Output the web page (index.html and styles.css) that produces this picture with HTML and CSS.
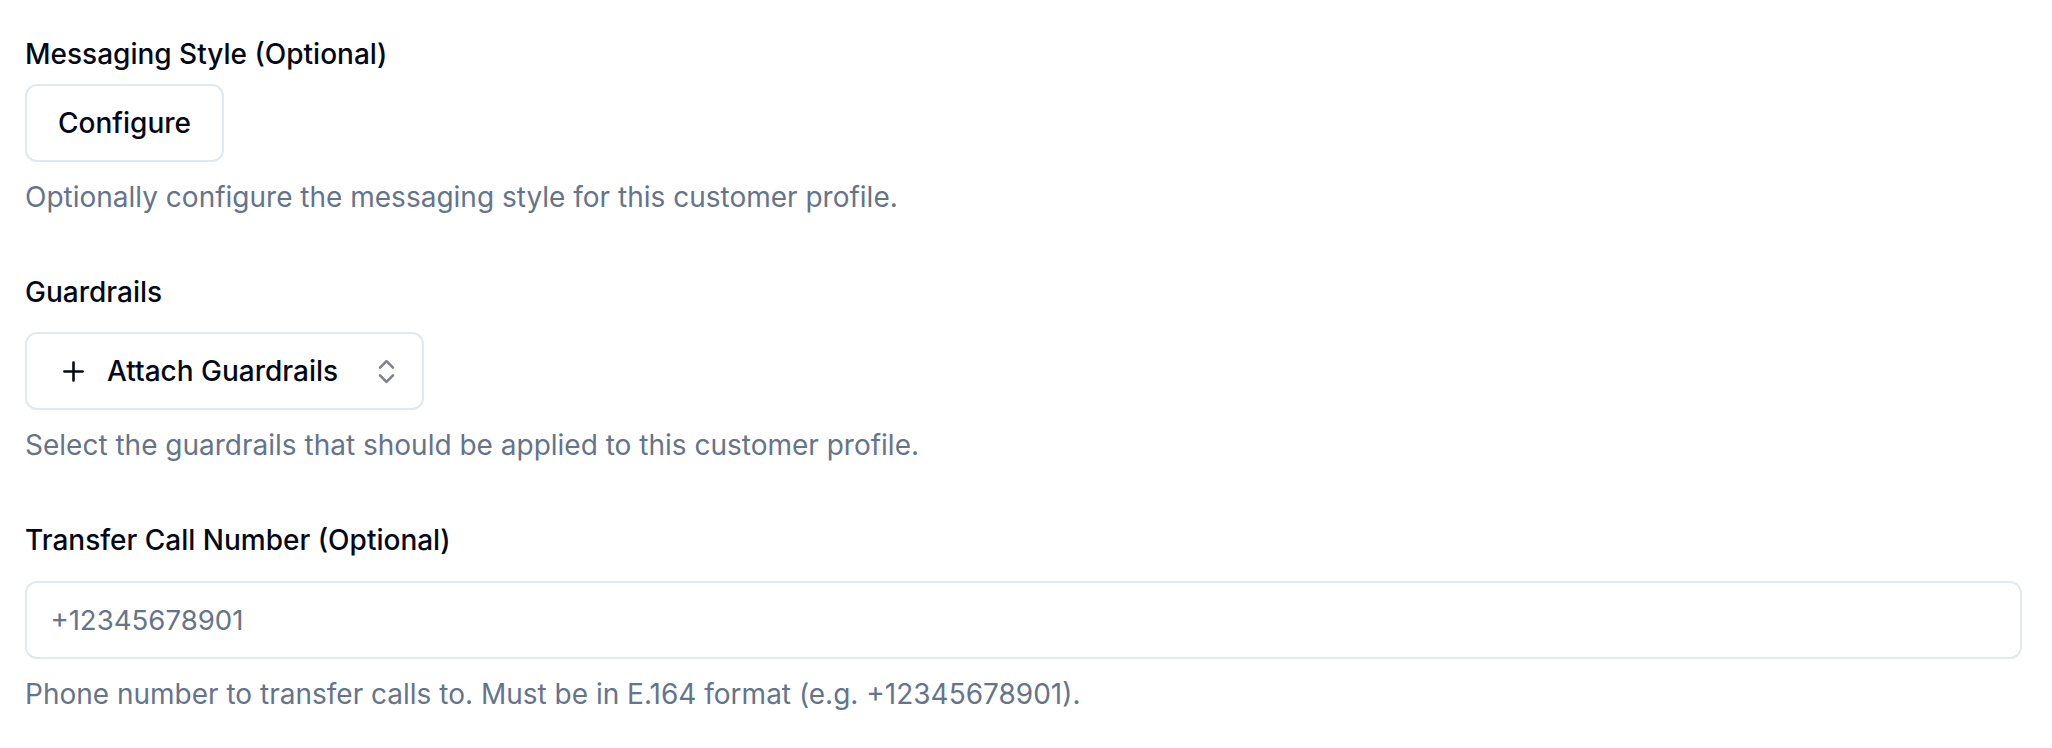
FILE: index.html
```html
<!DOCTYPE html>
<html lang="en">
<head>
<meta charset="utf-8">
<title>Customer profile form</title>
<link rel="stylesheet" href="styles.css">
</head>
<body>
<main class="form">
  <div class="field">
    <label class="label">Messaging Style (Optional)</label>
    <button class="btn" type="button">Configure</button>
    <p class="desc">Optionally configure the messaging style for this customer profile.</p>
  </div>
  <div class="field field-spaced">
    <label class="label">Guardrails</label>
    <button class="btn btn-combo" type="button">
      <svg class="icon icon-plus" viewBox="0 0 24 24" fill="none" stroke="currentColor" stroke-width="2" stroke-linecap="round" stroke-linejoin="round"><path d="M5 12h14"/><path d="M12 5v14"/></svg>
      <span class="combo-text">Attach Guardrails</span>
      <svg class="icon icon-chevrons" viewBox="0 0 24 24" fill="none" stroke="currentColor" stroke-width="2" stroke-linecap="round" stroke-linejoin="round"><path d="m7 15 5 5 5-5"/><path d="m7 9 5-5 5 5"/></svg>
    </button>
    <p class="desc">Select the guardrails that should be applied to this customer profile.</p>
  </div>
  <div class="field field-spaced">
    <label class="label" for="transfer">Transfer Call Number (Optional)</label>
    <input class="input" id="transfer" type="text" placeholder="+12345678901">
    <p class="desc">Phone number to transfer calls to. Must be in E.164 format (e.g. +12345678901).</p>
  </div>
</main>
</body>
</html>
```
FILE: styles.css
```css
* { box-sizing: border-box; }

html, body {
  margin: 0;
  background: #ffffff;
}

body {
  font-family: Inter, "Noto Sans", "Liberation Sans", sans-serif;
  color: #020817;
}

.form {
  display: flex;
  flex-direction: column;
  gap: 61px;
  padding: 39.5px 30px 0 25px;
}

.field {
  display: flex;
  flex-direction: column;
  align-items: flex-start;
  gap: 16px;
}

.label {
  font-size: 28px;
  line-height: 28px;
  font-weight: 500;
  color: #020817;
}

.field-spaced .label {
  margin-bottom: 10.5px;
}

.btn {
  display: inline-flex;
  align-items: center;
  height: 78px;
  padding: 0 31px;
  border: 2px solid #e2e8f0;
  border-radius: 12px;
  background: #ffffff;
  font-family: inherit;
  font-size: 28px;
  font-weight: 500;
  color: #020817;
  cursor: pointer;
}

.btn-combo {
  padding-right: 20px;
}

.icon {
  width: 31px;
  height: 31px;
  flex: none;
}

.combo-text {
  margin-left: 18px;
}

.icon-chevrons {
  margin-left: 33px;
  opacity: 0.5;
}

.input {
  width: 1997px;
  height: 78px;
  padding: 0 23.4px;
  border: 2px solid #e2e8f0;
  border-radius: 12px;
  background: #ffffff;
  font-family: inherit;
  font-size: 27.6px;
  color: #020817;
  outline: none;
}

.input::placeholder {
  color: #64748b;
}

.desc {
  margin: 0;
  font-size: 28px;
  line-height: 39px;
  font-weight: 400;
  color: #64748b;
}
```
